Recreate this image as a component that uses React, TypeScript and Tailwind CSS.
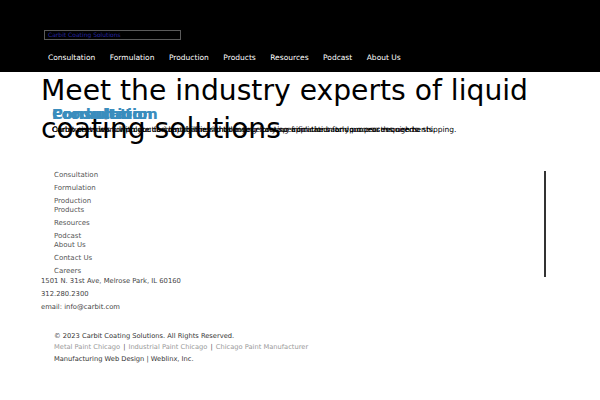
import React from "react";

const navItems = ["Consultation", "Formulation", "Production", "Products", "Resources", "Podcast", "About Us"];

const slides = [
  {
    title: "Consultation",
    text: "Our experts work with you to identify the right coating for your application and process requirements.",
  },
  {
    title: "Formulation",
    text: "Carbit chemists formulate custom coatings that meet exact specifications for your process needs.",
  },
  {
    title: "Production",
    text: "Carbit provides full production capabilities to take your coating from the batch process through to shipping.",
  },
];

const footerLinks: { label: string; tight?: boolean }[] = [
  { label: "Consultation" },
  { label: "Formulation" },
  { label: "Production", tight: true },
  { label: "Products" },
  { label: "Resources" },
  { label: "Podcast", tight: true },
  { label: "About Us" },
  { label: "Contact Us" },
  { label: "Careers", tight: true },
];

export default function App() {
  return (
    <div className="w-[600px] h-[400px] bg-white overflow-hidden" style={{ fontFamily: '"DejaVu Sans", sans-serif' }}>
      <header className="bg-black h-[72px] flex flex-col">
        <div className="pt-[30px] pl-[44px]">
          <div className="w-[137px] h-[10px] border border-[#5a5a5a] flex items-center pl-[3px]">
            <span className="text-[6px] leading-none text-[#2626a0]">Carbit Coating Solutions</span>
          </div>
        </div>
        <nav className="flex gap-[14.5px] pl-[48px] mt-[13px]">
          {navItems.map((n) => (
            <span key={n} className="text-white text-[7.5px] leading-[10px]">
              {n}
            </span>
          ))}
        </nav>
      </header>

      <section className="relative pl-[41px]">
        <h1 className="text-[28.2px] leading-[38px] text-black font-normal">
          Meet the industry experts of liquid coating solutions
        </h1>
        <div className="absolute left-[52px] top-[34px]">
          {slides.map((s) => (
            <div key={s.title} className="absolute left-0 top-0 w-[420px]">
              <div className="text-[14.8px] leading-[16px] font-bold text-[#3a8dbd]">{s.title}</div>
              <p className="text-[7.5px] leading-[10px] text-black mt-[3px] whitespace-nowrap">{s.text}</p>
            </div>
          ))}
        </div>
      </section>

      <footer className="mt-[23px]">
        <div className="flex">
          <ul className="pl-[54px] w-[546px] border-r-2 border-[#333] h-[106px] flex flex-col">
            {footerLinks.map((l) => (
              <li
                key={l.label}
                className={`text-[7px] leading-[9px] text-[#555] ${l.tight ? "mb-0" : "mb-[4px]"}`}
              >
                {l.label}
              </li>
            ))}
          </ul>
        </div>
        <div className="pl-[41px] text-[6.8px] leading-[13px] text-[#444] mt-[-2px]">
          <div>1501 N. 31st Ave, Melrose Park, IL 60160</div>
          <div>312.280.2300</div>
          <div>email: info@carbit.com</div>
        </div>
        <div className="pl-[54px] mt-[16px] text-[6.7px] leading-[12px]">
          <div className="text-[#333]">© 2023 Carbit Coating Solutions. All Rights Reserved.</div>
          <div className="text-[#999] leading-[11px]">
            <span>Metal Paint Chicago</span>
            <span className="text-[#555] mx-[3px]">|</span>
            <span>Industrial Paint Chicago</span>
            <span className="text-[#555] mx-[3px]">|</span>
            <span>Chicago Paint Manufacturer</span>
          </div>
          <div className="text-[#333]">Manufacturing Web Design | Weblinx, Inc.</div>
        </div>
      </footer>
    </div>
  );
}
